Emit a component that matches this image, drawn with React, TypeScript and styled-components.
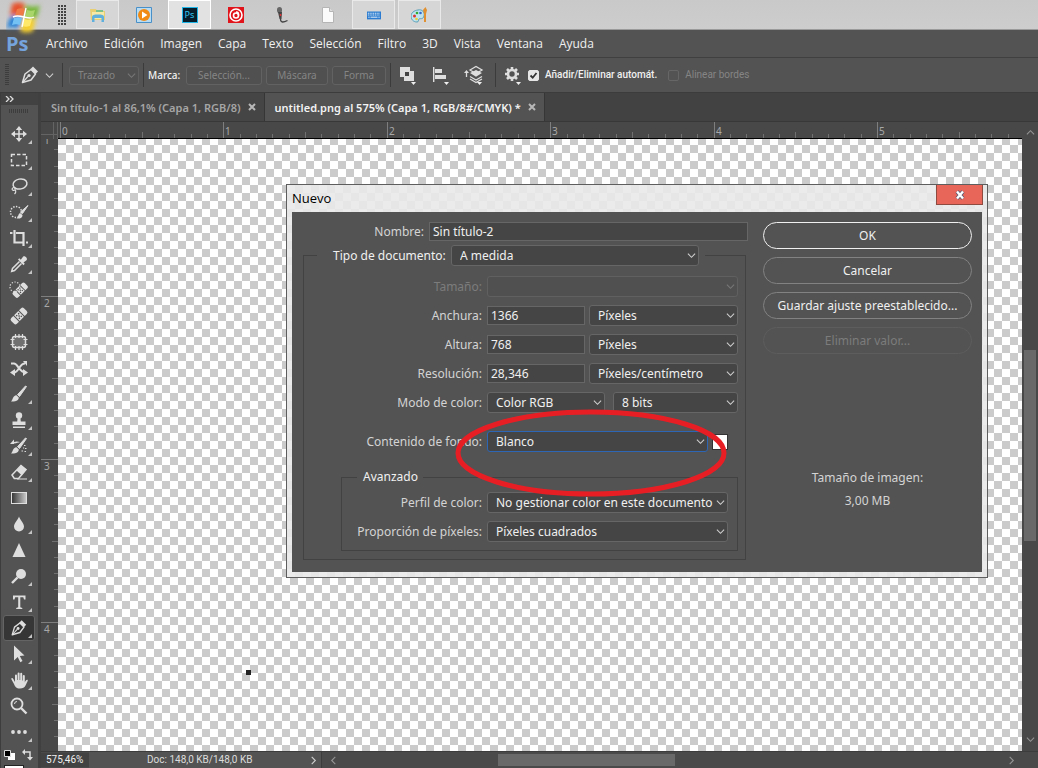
import React from "react";
import styled, { createGlobalStyle, css } from "styled-components";

const GlobalStyle = createGlobalStyle`
  *, *::before, *::after { box-sizing: border-box; }
  body {
    margin: 0;
    background: #535353;
    color: #f0f0f0;
    font-family: "Noto Sans", "Open Sans", sans-serif;
    font-size: 12px;
  }
  button, input, select { font: inherit; color: inherit; margin: 0; }
  svg { display: block; flex: none; }
`;

/* ---------- shell ---------- */

const Shell = styled.div`
  display: flex;
  flex-direction: column;
  height: 100vh;
  overflow: hidden;
`;

const TaskBar = styled.nav`
  display: flex;
  align-items: stretch;
  flex: none;
  height: 30px;
  padding-left: 6px;
  background: linear-gradient(#c9c9c9, #cdcdcd);
  border-bottom: 1px solid #9a9a9a;
`;

const StartButton = styled.button`
  position: relative;
  width: 38px;
  padding: 0;
  border: 0;
  background: none;
  z-index: 2;
`;

const TaskGrip = styled.span`
  width: 9px;
  margin: 5px 9px 4px 14px;
  background: radial-gradient(circle at 1px 1px, #444 1px, transparent 1px) 0 0 / 3px 3px;
`;

const TaskButton = styled.button<{ $state?: "open" | "active" }>`
  display: flex;
  align-items: center;
  justify-content: center;
  width: 43px;
  margin-right: 3px;
  padding: 0;
  background: transparent;
  border: 1px solid transparent;
  ${(p) => p.$state === "open" && css`background: #d6d6d6; border-color: #e9e9e9;`}
  ${(p) => p.$state === "active" && css`background: #e2e2e2; border: 1px solid #fff;`}
`;

const MenuBar = styled.nav`
  display: flex;
  align-items: center;
  flex: none;
  height: 28px;
  padding-left: 6px;
  border-bottom: 1px solid #404040;
`;

const Brand = styled.span`
  width: 32px;
  color: #75a3dc;
  font-family: "Open Sans", sans-serif;
  font-size: 20px;
  font-weight: 700;
  line-height: 24px;
`;

const MenuItem = styled.button`
  padding: 0 8px;
  border: 0;
  background: none;
  font-family: "Open Sans", sans-serif;
  line-height: 20px;
`;

const OptionsBar = styled.div`
  display: flex;
  align-items: center;
  flex: none;
  height: 35px;
  padding-left: 5px;
  border-bottom: 1px solid #3c3c3c;
  font-size: 10px;
`;

const Grip = styled.span<{ $wide?: boolean }>`
  display: block;
  flex: none;
  width: ${(p) => (p.$wide ? 20 : 4)}px;
  height: ${(p) => (p.$wide ? 4 : 22)}px;
  margin-right: ${(p) => (p.$wide ? 0 : 6)}px;
  background: repeating-linear-gradient(
    ${(p) => (p.$wide ? "90deg" : "180deg")}, #3d3d3d 0 1px, transparent 1px 2px);
`;

const Separator = styled.span<{ $before?: number; $after?: number }>`
  flex: none;
  width: 1px;
  height: 24px;
  margin: 0 ${(p) => p.$after ?? 6}px 0 ${(p) => p.$before ?? 0}px;
  background: #3b3b3b;
`;

const IconButton = styled.button<{ $width: number }>`
  display: flex;
  align-items: center;
  justify-content: center;
  flex: none;
  width: ${(p) => p.$width}px;
  height: 26px;
  padding: 0;
  border: 0;
  background: none;
`;

const IconGroup = styled.div`
  display: flex;
  gap: 11px;
`;

const QuietButton = styled.button<{ $width: number }>`
  width: ${(p) => p.$width}px;
  height: 19px;
  margin-right: 4px;
  padding: 0;
  border: 1px solid #626262;
  border-radius: 3px;
  background: #505050;
  line-height: 17px;
  &:disabled { color: #858585; }
`;

const MarkLabel = styled.span`
  width: 38px;
  font-weight: 500;
`;

const CheckLabel = styled.label<{ $off?: boolean }>`
  display: flex;
  align-items: center;
  gap: 6px;
  margin-left: ${(p) => (p.$off ? 11 : 4)}px;
  font-family: Roboto, sans-serif;
  line-height: 16px;
  white-space: nowrap;
  color: ${(p) => (p.$off ? "#858585" : "#f0f0f0")};
  font-weight: ${(p) => (p.$off ? 400 : 500)};
`;

const CheckBox = styled.input`
  appearance: none;
  width: 11px;
  height: 11px;
  border: 1px solid #666;
  border-radius: 2px;
  &:checked {
    border-color: #e6e6e6;
    background: #e6e6e6 url("data:image/svg+xml,%3Csvg xmlns='http://www.w3.org/2000/svg' viewBox='0 0 9 9'%3E%3Cpath d='M1.5 4.5l2.200 2.200L7.500 2' fill='none' stroke='%23333' stroke-width='1.800'/%3E%3C/svg%3E") center / 9px 9px no-repeat;
  }
`;

/* ---------- workspace ---------- */

const Workspace = styled.div`
  display: flex;
  flex: 1;
  min-height: 0;
`;

const ToolBox = styled.aside`
  display: flex;
  flex-direction: column;
  flex: none;
  width: 41px;
  border-left: 1px solid #3d3d3d;
  border-right: 3px solid #404040;
`;

const ToolBoxHead = styled.div`
  flex: none;
  height: 12px;
  padding: 3px 4px;
  background: #424242;
`;

const ToolGripRow = styled.div`
  flex: none;
  height: 16px;
  padding: 4px 0 0 8px;
`;

const Tool = styled.button<{ $active?: boolean }>`
  position: relative;
  display: flex;
  align-items: center;
  justify-content: center;
  flex: none;
  width: 32px;
  height: 26px;
  margin-left: 2px;
  padding: 0;
  border: 1px solid ${(p) => (p.$active ? "#646464" : "transparent")};
  border-radius: 3px;
  background: ${(p) => (p.$active ? "#363636" : "transparent")};
`;

const Corner = styled.span`
  position: absolute;
  right: 2px;
  bottom: 2px;
  border: 2px solid;
  border-color: transparent #c4c4c4 #c4c4c4 transparent;
`;

const Swatches = styled.div`
  display: flex;
  flex: none;
  flex-direction: column;
  gap: 4px;
  width: 32px;
  margin-left: 3px;
  padding-top: 4px;
`;

const ForegroundChip = styled.button`
  flex: none;
  width: 20px;
  height: 18px;
  padding: 0;
  border: 1px solid #222;
  background: #fff;
`;

const DocumentArea = styled.main`
  display: flex;
  flex-direction: column;
  flex: 1;
  min-width: 0;
`;

const TabStrip = styled.div`
  display: flex;
  flex: none;
  height: 29px;
  background: #424242;
  border-bottom: 1px solid #383838;
`;

const Tab = styled.div<{ $active?: boolean }>`
  display: flex;
  align-items: center;
  gap: 7px;
  padding: 0 8px 0 10px;
  border-right: 1px solid #363636;
  white-space: nowrap;
  font-size: 11px;
  font-weight: 600;
  background: ${(p) => (p.$active ? "#535353" : "#454545")};
  color: ${(p) => (p.$active ? "#f2f2f2" : "#a6a6a6")};
`;

const TabClose = styled.button`
  padding: 0;
  border: 0;
  background: none;
`;

const CanvasGrid = styled.div`
  display: grid;
  grid-template: 17px minmax(0, 1fr) 17px / 17px minmax(0, 1fr) 16px;
  flex: 1;
  min-height: 0;
  background: #484848;
`;

const RulerCorner = styled.div`
  border-right: 1px solid #777;
  background:
    linear-gradient(90deg, transparent 12px, #777 12px 13px, transparent 13px),
    linear-gradient(transparent 12px, #777 12px 13px, transparent 13px),
    #484848;
  opacity: 0.6;
`;

const RulerTrack = styled.div<{ $across?: boolean }>`
  overflow: hidden;
  min-width: 0;
  min-height: 0;
  border-bottom: ${(p) => (p.$across ? "1px solid #000" : "0")};
`;

const Artboard = styled.section`
  position: relative;
  min-width: 0;
  background: conic-gradient(#cbcbcb 25%, #fff 0 50%, #cbcbcb 0 75%, #fff 0) 0 6px / 16px 16px;
`;

const Speck = styled.span`
  position: absolute;
  left: 188px;
  top: 531px;
  width: 5px;
  height: 5px;
  background: #222;
`;

const ScrollColumn = styled.div`
  display: flex;
  flex-direction: column;
  align-items: center;
  grid-column: 3;
  grid-row: 1 / span 2;
  padding: 6px 1px 7px;
`;

const ThumbY = styled.span`
  width: 12px;
  flex: 192 1 0;
  background: #696969;
`;

const Space = styled.span<{ $grow: number }>`
  flex: ${(p) => p.$grow} 1 0;
`;

const StatusBar = styled.footer`
  display: flex;
  align-items: center;
  grid-column: 1 / -1;
  border-top: 1px solid #3c3c3c;
  background: #4a4a4a;
  font-family: Roboto, sans-serif;
  font-size: 10px;
  line-height: 14px;
  white-space: nowrap;
`;

const ZoomLevel = styled.span`
  width: 48px;
  padding-left: 5px;
  background: #424242;
`;

const DocSize = styled.span`
  display: flex;
  align-items: center;
  justify-content: space-between;
  width: 233px;
  height: 100%;
  padding: 0 3px 0 58px;
  border-right: 1px solid #3c3c3c;
  background: #535353;
  color: #dcdcdc;
`;

const ScrollRow = styled.div`
  display: flex;
  align-items: center;
  flex: 1;
  padding: 0 22px 0 7px;
`;

const ThumbX = styled.span`
  flex: 177 1 0;
  height: 12px;
  background: #696969;
`;

/* ---------- dialog ---------- */

const Dialog = styled.div`
  position: absolute;
  left: 228px;
  top: 45px;
  display: flex;
  flex-direction: column;
  width: 702px;
  padding: 0 5px 5px;
  border: 1px solid #5e5e5e;
  background: conic-gradient(#e6e6e6 25%, #ebebeb 0 50%, #e6e6e6 0 75%, #ebebeb 0) 0 0 / 16px 16px;
`;

const TitleBar = styled.header`
  display: flex;
  align-items: flex-start;
  justify-content: space-between;
  height: 27px;
  margin-right: -1px;
  color: #000;
  line-height: 27px;
`;

const Title = styled.h1`
  margin: 0;
  font-family: "Open Sans", sans-serif;
  font-size: 13px;
  font-weight: 400;
`;

const CloseButton = styled.button`
  display: flex;
  align-items: center;
  justify-content: center;
  width: 47px;
  height: 20px;
  padding: 0;
  border: 1px solid #8f4a40;
  border-top: 0;
  background: #e8655a;
`;

const DialogBody = styled.form`
  display: flex;
  gap: 15px;
  padding: 10px 10px 12px 11px;
  background: #535353;
`;

const FormColumn = styled.div`
  flex: 1;
`;

const Row = styled.div<{ $gap?: number }>`
  display: flex;
  align-items: center;
  height: 21px;
  margin-bottom: ${(p) => p.$gap ?? 8}px;
`;

const NameRow = styled.div`
  display: flex;
  align-items: center;
  height: 19px;
  margin-bottom: 4px;
`;

const FieldLabel = styled.label<{ $width: number; $off?: boolean }>`
  flex: none;
  width: ${(p) => p.$width}px;
  padding-right: 5px;
  text-align: right;
  white-space: nowrap;
  color: ${(p) => (p.$off ? "#7c7c7c" : "#d4d4d4")};
`;

const TextInput = styled.input<{ $width?: number }>`
  ${(p) => (p.$width ? css`width: ${p.$width}px; margin-right: 4px;` : css`flex: 1; min-width: 0;`)}
  height: 19px;
  padding: 0 3px;
  border: 1px solid #666;
  border-radius: 0;
  background: #454545;
  outline: 0;
`;

const SelectBox = styled.span<{ $width: number; $focus?: boolean; $off?: boolean; $small?: boolean }>`
  display: grid;
  grid-template-columns: minmax(0, 1fr) 12px;
  align-items: center;
  flex: none;
  width: ${(p) => p.$width}px;
  color: ${(p) => (p.$off ? (p.$small ? "#858585" : "#7c7c7c") : "#f0f0f0")};
  select {
    grid-area: 1 / 1 / 2 / 3;
    appearance: none;
    height: ${(p) => (p.$small ? 19 : 21)}px;
    padding: 0 0 0 8px;
    border: 1px solid ${(p) => (p.$focus ? "#2d66b4" : p.$off ? "#606060" : "#666")};
    border-radius: 3px;
    background: ${(p) => (p.$off ? "#505050" : "#454545")};
    outline: 0;
    opacity: 1;
    font-size: ${(p) => (p.$small ? 10 : 12)}px;
  }
  svg {
    grid-area: 1 / 2;
    pointer-events: none;
    opacity: ${(p) => (p.$off ? 0.3 : 1)};
  }
`;

const Gap = styled.span`
  width: 8px;
`;

const Group = styled.fieldset`
  width: 443px;
  margin: 0;
  padding: 10px 7px 8px 0;
  border: 1px solid #424242;
`;

const GroupLegend = styled.legend`
  display: flex;
  align-items: center;
  margin-left: 13px;
  padding: 0 6px 0 16px;
`;

const LegendLabel = styled.label`
  width: 118px;
  white-space: nowrap;
`;

const SubGroup = styled.fieldset`
  margin: 17px 0 0 37px;
  padding: 7px 0 0;
  border: 1px solid #424242;
`;

const SubLegend = styled.legend`
  margin-left: 15px;
  padding: 0 5px 0 6px;
  line-height: 16px;
`;

const ColorChip = styled.button`
  width: 16px;
  height: 16px;
  margin-left: 4px;
  padding: 0;
  border: 1px solid #333;
  background: #fff;
`;

const ActionColumn = styled.div`
  display: flex;
  flex-direction: column;
  gap: 8px;
  width: 209px;
`;

const Pill = styled.button<{ $primary?: boolean }>`
  height: 27px;
  padding: 0;
  border: ${(p) => (p.$primary ? "1px solid #f0f0f0" : "1px solid #828282")};
  border-radius: 14px;
  background: transparent;
  &:disabled { color: #7c7c7c; border-color: #5d5d5d; }
`;

const ImageSize = styled.div`
  margin-top: 104px;
  text-align: center;
  line-height: 23px;
  color: #d4d4d4;
`;

const Highlight = styled.svg`
  position: absolute;
  left: 168px;
  top: 223px;
  pointer-events: none;
`;

/* ---------- drawings ---------- */

const Chevron = ({ dir = "down", color = "#d0d0d0" }: { dir?: "down" | "up" | "left" | "right"; color?: string }) => {
  const d = { down: "M1 3l4 4 4-4", up: "M1 7l4-4 4 4", left: "M7 1L3 5l4 4", right: "M3 1l4 4-4 4" }[dir];
  return <svg width="9" height="9" viewBox="0 0 10 10" fill="none" stroke={color} strokeWidth="1.2"><path d={d} /></svg>;
};

const Cross = ({ color = "#b8b8b8" }: { color?: string }) => (
  <svg width="8" height="8" viewBox="0 0 8 8" stroke={color} strokeWidth="2"><path d="M1 1l6 6M7 1L1 7" /></svg>
);

const W = "#dedede";
const line = { fill: "none", stroke: W, strokeWidth: 1.5 };

const PenShape = () => (
  <>
    <path d="M2.500 17.500L5 9l6-4.500 4.500 4.500L11 15z" {...line} strokeLinejoin="round" />
    <path d="M10.500 4l2.500-2.500 5 5-2.500 2.500z" fill={W} />
    <path d="M2.500 17.500l5.500-6" {...line} strokeWidth="1.200" />
    <circle cx="9" cy="10.500" r="1.600" fill={W} />
  </>
);

const Bandage = () => (
  <g transform="rotate(-45 10 10)">
    <path d="M3 6h3v8H3a2 2 0 01-2-2V8a2 2 0 012-2zM14 6h3a2 2 0 012 2v4a2 2 0 01-2 2h-3z" fill={W} />
    <path d="M7 6h6v8H7z" fill={W} />
    <path d="M8 7.500h1.300v1.300H8zM10.700 7.500H12v1.300h-1.300zM8 11.200h1.300v1.300H8zM10.700 11.200H12v1.300h-1.300zM9.400 9.400h1.300v1.300H9.400z" fill="#444" />
  </g>
);

const BrushShape = () => (
  <>
    <path d="M17.500 2.500l-7 10-2-1.800L16.500 2z" fill={W} stroke={W} />
    <path d="M7.500 11.300l2.300 2.200c0 3-3.500 4.500-7.800 4 2-1.500 1.500-5.700 5.500-6.200z" fill={W} />
  </>
);

const drawings: Record<string, React.ReactNode> = {
  Mover: <g transform="translate(2 2) scale(.8)"><path d="M10 3v14M3 10h14" {...line} strokeWidth="1.900" /><path d="M10 0l4 5H6zM10 20l4-5H6zM0 10l5-4v8zM20 10l-5-4v8z" fill={W} /></g>,
  Marco: <path d="M2.500 4.500h15v11h-15z" {...line} strokeDasharray="3.500 2" />,
  Lazo: <><ellipse cx="11" cy="8" rx="7" ry="5" transform="rotate(-12 11 8)" {...line} /><path d="M5 11.500c-2 0-2.600 2.400-.8 2.800 2 .4 3-2 1-2.700M6 14c1.500 1 .5 3-.5 4" {...line} strokeWidth="1.200" /></>,
  "Selección rápida": <><circle cx="7" cy="10" r="5.500" {...line} strokeDasharray="1.400 1.400" /><path d="M19 3.500l-5.500 8-2-1.500z" fill={W} stroke={W} /><path d="M11 11l2.500 2c0 3-2.500 4-6 3.500 2-1.500 1.500-4.500 3.500-5.500z" fill={W} /></>,
  Recortar: <path d="M5.500 2v12.500H14M17 14.500h2M1 5h2.500M7 5h7.500v13" {...line} strokeWidth="2.200" />,
  Cuentagotas: <><path d="M10.500 7.500l-7 7-.8 2.800 2.800-.8 7-7" {...line} /><path d="M9 5.500l1.300-1.300 1.500 1.500 2.200-3c1.500-1.800 5.300 1.500 3.500 3.500l-3 2.300 1.300 1.300-1.300 1.400z" fill={W} /></>,
  "Pincel corrector puntual": <><circle cx="6" cy="7" r="5" {...line} strokeWidth="1.200" strokeDasharray="1.200 1.600" /><g transform="translate(2 1) scale(.92)"><Bandage /></g></>,
  "Pincel corrector": <Bandage />,
  Parche: <><rect x="3.500" y="4.500" width="13" height="11" rx="2" {...line} fill="#707070" /><path d="M6.500 2v4M10 2v4M13.500 2v4M6.500 14v4M10 14v4M13.500 14v4M1.500 7.500h4M1.500 12.500h4M14.500 7.500h4M14.500 12.500h4" stroke={W} strokeWidth="1.200" /></>,
  "Mover con detección": <><path d="M2 5.500h3c4 0 5 9 12 9M3 14.500h2c5 0 5-9 11-9" {...line} strokeWidth="2" /><path d="M1 14.500l5-3.500v7zM19 14.500L14 11v7zM14 3h4v5z" fill={W} /></>,
  Pincel: <BrushShape />,
  Tampón: <><circle cx="10" cy="5.500" r="3.200" fill={W} /><path d="M8.700 7h2.600l.5 4.500h4.700v3.500h-13v-3.500h4.700zM4 16.500h12v1.500H4z" fill={W} /></>,
  "Pincel de historia": <><BrushShape /><path d="M1 8l4-4.500V6c2-.800 4-.6 6 0-2 .8-3 1-6 1.500V8z" fill={W} /><path d="M15 9.500h1.500M16 12.500h1.500M14 12h1.200M12.500 15H14M15.500 15.500H17" stroke={W} /></>,
  Borrador: <><path d="M3 13l9-9.500 5 4L9.500 16.500H5.300z" {...line} /><path d="M7.500 8.500L12 3.500l5.500 4-4.800 5.800z" fill={W} /><path d="M8 17h10" stroke={W} /></>,
  Degradado: <><defs><linearGradient id="ramp"><stop stopColor="#333" /><stop offset="1" stopColor="#ccc" /></linearGradient></defs><rect x="2.500" y="4.500" width="15" height="11" fill="url(#ramp)" stroke={W} /></>,
  Desenfocar: <path d="M10 2.500c1 3.500 5 6.500 5 10a5 5 0 01-10 0c0-3.500 4-6.500 5-10z" fill={W} />,
  Enfocar: <path d="M10 3l6.500 14h-13z" fill={W} />,
  Sobreexponer: <><circle cx="12" cy="8" r="5" fill={W} /><path d="M8.500 11.500L3 17" stroke={W} strokeWidth="2.400" /></>,
  Texto: <path d="M4 3.500h12.500v4H15l-.7-2.200h-3v10l2 .6v1.100H7.200v-1.100l2-.6v-10h-3L5.500 7.500H4z" fill={W} />,
  Pluma: <PenShape />,
  Trazado: <path d="M5 1.500l10.500 10-4.700.4 2.700 5.200-2.200 1.200-2.600-5.300L5 16.500z" fill={W} />,
  Mano: <path d="M6 12V5.500a1 1 0 012 0V10h.6V3.500a1 1 0 012 0V10h.6V3.800a1 1 0 012 0v6.700h.6V6a1 1 0 012 0v6.500c.8-2 1.500-3 2.800-2.700.8.300-1 3.700-2.100 5.700-1.300 2.200-2.500 3-5.500 3-3.800 0-5-2-6-4.500L2.500 9.500C1.800 8 3.500 7.500 4.300 9z" fill={W} />,
  Zoom: <><circle cx="8" cy="8" r="5.500" {...line} strokeWidth="1.800" /><path d="M5.500 8A2.500 2.500 0 018 5.500" {...line} strokeWidth="1" /><path d="M12 12l5.500 5.500" stroke={W} strokeWidth="2.400" /></>,
  Más: <><circle cx="4" cy="10" r="1.900" fill={W} /><circle cx="10" cy="10" r="1.900" fill={W} /><circle cx="16" cy="10" r="1.900" fill={W} /></>,
};

const withoutCorner = ["Pincel corrector puntual", "Pincel corrector", "Parche", "Mover con detección", "Degradado", "Enfocar", "Zoom"];

const Glyph = ({ name, size = 20 }: { name: string; size?: number }) => (
  <svg width={size} height={size} viewBox="0 0 20 20">{drawings[name]}</svg>
);

const StartLogo = () => (
  <svg width="38" height="38" viewBox="0 0 38 38">
    <defs><filter id="glow" x="-40%" y="-40%" width="180%" height="180%"><feGaussianBlur stdDeviation="2" /></filter></defs>
    <g filter="url(#glow)">
      <path d="M6 4c4-2 9-2 13 0l-3 12c-4-2-8-2-12 0z" fill="#e5532d" />
      <path d="M20 5c5 2 9 2 14 0l-3 12c-5 2-10 2-14 0z" fill="#78b83a" />
      <path d="M4 17c4-2 8-2 12 0l-3 12c-4-2-9-2-13 0z" fill="#2b83d6" />
      <path d="M17 18c4 2 9 2 13 0l-3 13c-4 2-9 2-13 0z" fill="#f5cf2d" />
    </g>
    <path d="M11 9c3-1 5-1 8 0l-2 7c-3-1-5-1-8 0z" fill="#ee7a48" />
    <path d="M21 10c3 1 5 1 8 0l-2 7c-3 1-5 1-8 0z" fill="#a9d56a" />
    <path d="M8 18c3-1 5-1 8 0l-2 7c-3-1-5-1-8 0z" fill="#74c1f4" />
    <path d="M18 19c3 1 5 1 8 0l-2 7c-3 1-5 1-8 0z" fill="#ffe86a" />
    <path d="M20 8l-4 19M7 17c4-2 7-1 11 0s7 2 10 0" stroke="#fff" strokeWidth="1.400" fill="none" />
  </svg>
);

const PsText = styled.span`
  width: 16px;
  height: 16px;
  border: 1px solid #20b6e8;
  background: #061e2c;
  color: #31c5f0;
  font-size: 9px;
  line-height: 13px;
  text-align: center;
`;

const apps: { name: string; state?: "open" | "active"; art: React.ReactNode }[] = [
  { name: "Explorador", state: "open", art: <svg width="16" height="16" viewBox="0 0 16 16"><path d="M0 2h6l1 2h8v9H1z" fill="#e8cf72" /><path d="M2 5h12v7H2z" fill="#f6e9a6" /><path d="M6 3h7v2H6z" fill="#7cc08a" /><path d="M2 15v-5c0-2 2-2.500 6-2.500s6 .5 6 2.500v5h-2.500v-4h-7v4z" fill="#5fb0dc" /></svg> },
  { name: "Reproductor", art: <svg width="16" height="16" viewBox="0 0 16 16"><path d="M.5.500h15v15H.5z" fill="#b9dcf3" stroke="#4a90c8" /><circle cx="8" cy="8" r="6" fill="#f08a12" /><path d="M6 4.500l5.500 3.500L6 11.500z" fill="#fff" /></svg> },
  { name: "Photoshop", state: "active", art: <PsText>Ps</PsText> },
  { name: "Grabadora", art: <svg width="16" height="16" viewBox="0 0 16 16"><path d="M0 0h16v16H0z" fill="#e0141a" /><g fill="none" stroke="#fff" strokeWidth="1.600"><circle cx="8" cy="8" r="6" /><circle cx="8" cy="8.500" r="2.500" /><path d="M10.500 8.500c0-2.500 0-3.500-2.500-3.500" /></g></svg> },
  { name: "Micrófono", art: <svg width="16" height="16" viewBox="0 0 16 16"><rect x="3" y="0" width="5" height="6" rx="2.500" fill="#666" /><path d="M4 5h4l-.5 7h-2z" fill="#444" /><path d="M6.500 7v2" stroke="#d33" strokeWidth="1.500" /><path d="M6.500 12c0 4 3 3.500 7 1.500" fill="none" stroke="#444" strokeWidth="1.300" /></svg> },
  { name: "Documento", art: <svg width="16" height="16" viewBox="0 0 16 16"><path d="M2.500.500h7l4 4v11h-11z" fill="#fafafa" stroke="#b5b5b5" /><path d="M9.500.500v4h4" fill="#ddd" stroke="#b5b5b5" /></svg> },
  { name: "Teclado", state: "open", art: <svg width="14" height="10" viewBox="0 0 16 10"><rect width="16" height="9" y="1" fill="#2b7cd0" /><path d="M1 3h14M1 5h14" stroke="#fff" strokeDasharray="1.200 .8" /><path d="M1.500 7.500H3M4 7.500h8M13 7.500h1.500" stroke="#fff" /></svg> },
  { name: "Paint", state: "open", art: <svg width="17" height="16" viewBox="0 0 17 16"><path d="M7 3c4-1 7 2 6 6-1 4-4 2-5 3s0 3-2 3c-4 0-6-3-6-6s3-5.500 7-6z" fill="#bfe3ef" stroke="#5aa0b8" /><circle cx="3.500" cy="9" r="1.500" fill="#d33" /><circle cx="6" cy="6" r="1.300" fill="#3a3" /><circle cx="9.500" cy="6" r="1.300" fill="#36c" /><circle cx="5.500" cy="12" r="1.300" fill="#ec3" /><path d="M13 15V7l-1-4 2.500-3L16 3l-1 4v8z" fill="#e09030" /></svg> },
];

const RulerX = () => (
  <svg width="100%" height="16">
    {Array.from({ length: 130 }, (_, i) => {
      const x = Math.round(2 + i * 16.34) + 0.5;
      return <path key={i} d={`M${x} ${i % 10 === 0 ? 0 : i % 5 === 0 ? 10 : 12}V16`} stroke={i % 10 === 0 ? "#7e7e7e" : "#707070"} />;
    })}
    {Array.from({ length: 6 }, (_, i) => (
      <text key={i} x={Math.round(4 + i * 163.4)} y="13" fill="#a8a8a8" fontSize="10">{i}</text>
    ))}
  </svg>
);

const RulerY = () => (
  <svg width="17" height="100%">
    {Array.from({ length: 110 }, (_, i) => {
      const y = Math.round(-6 + i * 16.3) + 0.5;
      return <path key={i} d={`M${i % 10 === 0 ? 0 : i % 5 === 0 ? 11 : 13} ${y}H17`} stroke={i % 10 === 0 ? "#7e7e7e" : "#707070"} />;
    })}
    {Array.from({ length: 4 }, (_, i) => (
      <text key={i} x="3" y={Math.round(5 + i * 163)} fill="#a8a8a8" fontSize="10">{i + 1}</text>
    ))}
  </svg>
);

const MenuMark = () => <path d="M13 17h5l-2.500 3z" fill="#f0f0f0" />;

/* ---------- form pieces ---------- */

type PickProps = { id: string; value: string; width: number; focus?: boolean; off?: boolean; small?: boolean };

const Pick = ({ id, value, width, focus, off, small }: PickProps) => (
  <SelectBox $width={width} $focus={focus} $off={off} $small={small}>
    <select id={id} disabled={off} aria-label={value || id} defaultValue={value}>
      <option>{value}</option>
    </select>
    <Chevron />
  </SelectBox>
);

const measures = [
  { id: "anchura", label: "Anchura:", value: "1366", unit: "Píxeles" },
  { id: "altura", label: "Altura:", value: "768", unit: "Píxeles" },
  { id: "resolucion", label: "Resolución:", value: "28,346", unit: "Píxeles/centímetro" },
];

const NewDocumentDialog = () => (
  <Dialog role="dialog" aria-labelledby="dialog-title">
    <TitleBar>
      <Title id="dialog-title">Nuevo</Title>
      <CloseButton aria-label="Cerrar">
        <svg width="12" height="10" viewBox="0 0 12 10"><path d="M3 1.500l6 7M9 1.500l-6 7" stroke="#5a5a70" strokeWidth="4" /><path d="M3 1.500l6 7M9 1.500l-6 7" stroke="#fff" strokeWidth="2.400" /></svg>
      </CloseButton>
    </TitleBar>
    <DialogBody onSubmit={(e) => e.preventDefault()}>
      <FormColumn>
        <NameRow>
          <FieldLabel htmlFor="nombre" $width={126}>Nombre:</FieldLabel>
          <TextInput id="nombre" defaultValue="Sin título-2" />
        </NameRow>
        <Group>
          <GroupLegend>
            <LegendLabel htmlFor="tipo">Tipo de documento:</LegendLabel>
            <Pick id="tipo" value="A medida" width={248} />
          </GroupLegend>
          <Row>
            <FieldLabel htmlFor="tamano" $width={183} $off>Tamaño:</FieldLabel>
            <Pick id="tamano" value="" width={251} off />
          </Row>
          {measures.map((m) => (
            <Row key={m.id}>
              <FieldLabel htmlFor={m.id} $width={183}>{m.label}</FieldLabel>
              <TextInput id={m.id} $width={98} defaultValue={m.value} />
              <Pick id={`${m.id}-unidad`} value={m.unit} width={149} />
            </Row>
          ))}
          <Row $gap={18}>
            <FieldLabel htmlFor="modo" $width={183}>Modo de color:</FieldLabel>
            <Pick id="modo" value="Color RGB" width={118} />
            <Gap />
            <Pick id="bits" value="8 bits" width={125} />
          </Row>
          <Row $gap={0}>
            <FieldLabel htmlFor="fondo" $width={183}>Contenido de fondo:</FieldLabel>
            <Pick id="fondo" value="Blanco" width={221} focus />
            <ColorChip type="button" aria-label="Color de fondo" />
          </Row>
          <SubGroup>
            <SubLegend>Avanzado</SubLegend>
            <Row>
              <FieldLabel htmlFor="perfil" $width={145}>Perfil de color:</FieldLabel>
              <Pick id="perfil" value="No gestionar color en este documento" width={241} />
            </Row>
            <Row>
              <FieldLabel htmlFor="proporcion" $width={145}>Proporción de píxeles:</FieldLabel>
              <Pick id="proporcion" value="Píxeles cuadrados" width={241} />
            </Row>
          </SubGroup>
        </Group>
      </FormColumn>
      <ActionColumn>
        <Pill $primary>OK</Pill>
        <Pill type="button">Cancelar</Pill>
        <Pill type="button">Guardar ajuste preestablecido...</Pill>
        <Pill type="button" disabled>Eliminar valor...</Pill>
        <ImageSize>
          <div>Tamaño de imagen:</div>
          <div>3,00 MB</div>
        </ImageSize>
      </ActionColumn>
    </DialogBody>
    <Highlight width="274" height="92" viewBox="0 0 274 92">
      <ellipse cx="136" cy="45" rx="133" ry="41" fill="none" stroke="#e81e25" strokeWidth="5" />
    </Highlight>
  </Dialog>
);

const menus = ["Archivo", "Edición", "Imagen", "Capa", "Texto", "Selección", "Filtro", "3D", "Vista", "Ventana", "Ayuda"];

export default function App() {
  return (
    <Shell>
      <GlobalStyle />
      <TaskBar>
        <StartButton aria-label="Inicio"><StartLogo /></StartButton>
        <TaskGrip />
        {apps.map((a) => (
          <TaskButton key={a.name} $state={a.state} aria-label={a.name}>{a.art}</TaskButton>
        ))}
      </TaskBar>
      <MenuBar>
        <Brand>Ps</Brand>
        {menus.map((m) => <MenuItem key={m}>{m}</MenuItem>)}
      </MenuBar>
      <OptionsBar>
        <Grip />
        <IconButton $width={30} aria-label="Pluma activa"><Glyph name="Pluma" /></IconButton>
        <IconButton $width={9} aria-label="Ajustes de pluma"><Chevron /></IconButton>
        <Separator $before={8} />
        <Pick id="trazo" value="Trazado" width={70} off small />
        <Separator $before={4} $after={4} />
        <MarkLabel>Marca:</MarkLabel>
        <QuietButton $width={76} disabled>Selección...</QuietButton>
        <QuietButton $width={62} disabled>Máscara</QuietButton>
        <QuietButton $width={54} disabled>Forma</QuietButton>
        <Separator />
        <IconGroup>
          <IconButton $width={22} aria-label="Operaciones de trazado">
            <svg width="20" height="20" viewBox="0 0 20 20"><path d="M2 2h10v4h4v10H6v-4H2z" fill={W} /><path d="M7 7h4v4H7z" fill="#444" /><MenuMark /></svg>
          </IconButton>
          <IconButton $width={22} aria-label="Alineación">
            <svg width="20" height="20" viewBox="0 0 20 20"><path d="M2 2h1.400v15H2zM4 4h7v4H4zM4 10h11v4H4z" fill={W} /><MenuMark /></svg>
          </IconButton>
          <IconButton $width={22} aria-label="Disposición">
            <svg width="20" height="20" viewBox="0 0 20 20"><path d="M6 5l6-3.500L18 5l-6 3.500zM6 11.500l6 3.500 6-3.500M6 14l6 3.500 6-3.500" fill="none" stroke={W} strokeWidth="1.300" /><path d="M6 8l6-3 6 3-6 3.800z" fill={W} /><path d="M2.500 12V7" stroke={W} strokeWidth="1.300" /><path d="M0 8l2.500-3L5 8z" fill={W} /><MenuMark /></svg>
          </IconButton>
        </IconGroup>
        <Separator $before={10} />
        <IconButton $width={22} aria-label="Opciones">
          <svg width="20" height="20" viewBox="0 0 20 20"><circle cx="9" cy="9" r="4" fill="none" stroke={W} strokeWidth="2.600" /><path d="M9 2v3M9 13v3M2 9h3M13 9h3M4 4l2 2M12 12l2 2M14 4l-2 2M4 14l2-2" stroke={W} strokeWidth="2.600" /><MenuMark /></svg>
        </IconButton>
        <CheckLabel><CheckBox type="checkbox" defaultChecked />Añadir/Eliminar automát.</CheckLabel>
        <CheckLabel $off><CheckBox type="checkbox" disabled />Alinear bordes</CheckLabel>
      </OptionsBar>
      <Workspace>
        <ToolBox>
          <ToolBoxHead>
            <svg width="9" height="6" viewBox="0 0 9 6" fill="none" stroke="#ddd" strokeWidth="1.300"><path d="M1 0l3 3-3 3M5 0l3 3-3 3" /></svg>
          </ToolBoxHead>
          <ToolGripRow><Grip $wide /></ToolGripRow>
          {Object.keys(drawings).map((name) => (
            <Tool key={name} $active={name === "Pluma"} aria-label={name}>
              <Glyph name={name} size={name === "Pluma" ? 18 : 20} />
              {!withoutCorner.includes(name) && <Corner />}
            </Tool>
          ))}
          <Swatches>
            <svg width="32" height="12" viewBox="0 0 32 12"><path d="M4 4h7v7H4z" fill="#fff" /><path d="M.5 1.500h6v6h-6z" fill="#000" stroke="#ddd" /><path d="M20 3h6v7" {...line} /><path d="M21 0v6l-3-3zM23 8h6l-3 3.500z" fill={W} /></svg>
            <ForegroundChip aria-label="Color frontal" />
          </Swatches>
        </ToolBox>
        <DocumentArea>
          <TabStrip>
            <Tab>Sin título-1 al 86,1% (Capa 1, RGB/8)<TabClose aria-label="Cerrar Sin título-1"><Cross /></TabClose></Tab>
            <Tab $active>untitled.png al 575% (Capa 1, RGB/8#/CMYK) *<TabClose aria-label="Cerrar untitled.png"><Cross /></TabClose></Tab>
          </TabStrip>
          <CanvasGrid>
            <RulerCorner />
            <RulerTrack $across><RulerX /></RulerTrack>
            <ScrollColumn>
              <Chevron dir="up" color="#959595" />
              <Space $grow={213} />
              <ThumbY />
              <Space $grow={194} />
              <Chevron color="#959595" />
            </ScrollColumn>
            <RulerTrack><RulerY /></RulerTrack>
            <Artboard>
              <Speck />
              <NewDocumentDialog />
            </Artboard>
            <StatusBar>
              <ZoomLevel>575,46%</ZoomLevel>
              <DocSize>Doc: 148,0 KB/148,0 KB<Chevron dir="right" /></DocSize>
              <ScrollRow>
                <Chevron dir="left" color="#959595" />
                <Space $grow={160} />
                <ThumbX />
                <Space $grow={332} />
                <Chevron dir="right" color="#959595" />
              </ScrollRow>
            </StatusBar>
          </CanvasGrid>
        </DocumentArea>
      </Workspace>
    </Shell>
  );
}
